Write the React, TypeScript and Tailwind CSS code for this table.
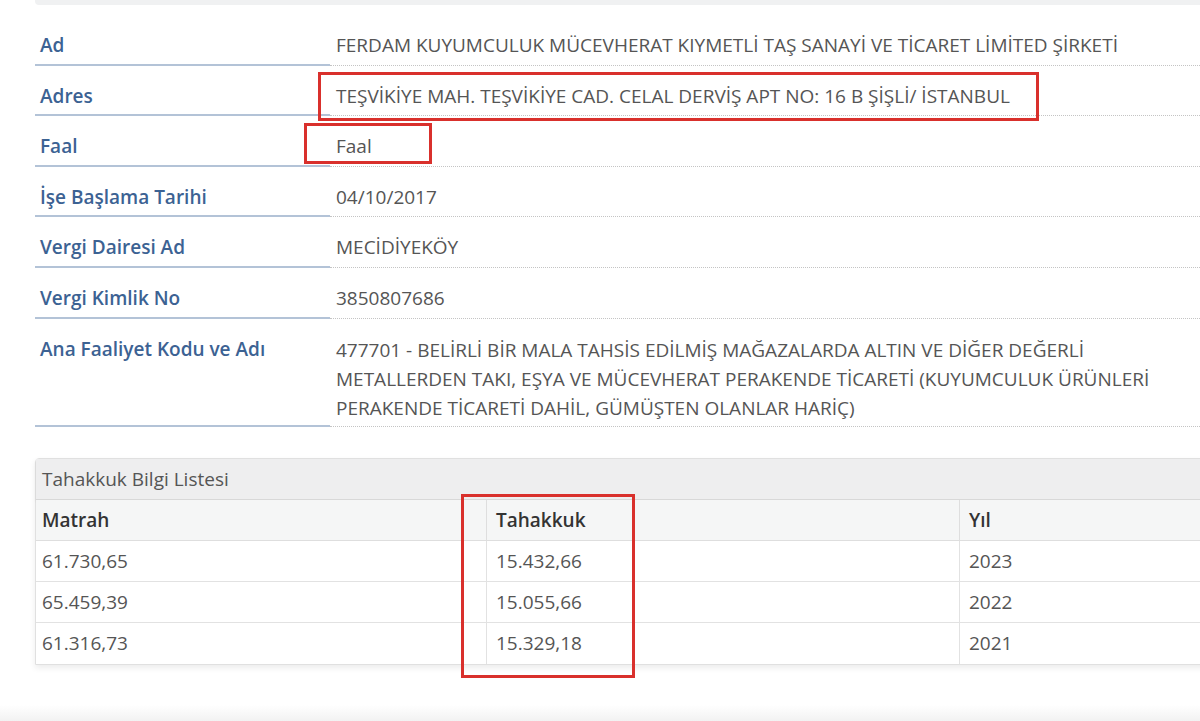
import type { ReactNode } from 'react'

type Row = { label: string; value: ReactNode; tall?: boolean }

const rows: Row[] = [
  { label: 'Ad', value: 'FERDAM KUYUMCULUK MÜCEVHERAT KIYMETLİ TAŞ SANAYİ VE TİCARET LİMİTED ŞİRKETİ' },
  { label: 'Adres', value: 'TEŞVİKİYE MAH. TEŞVİKİYE CAD. CELAL DERVİŞ APT NO: 16 B ŞİŞLİ/ İSTANBUL' },
  { label: 'Faal', value: 'Faal' },
  { label: 'İşe Başlama Tarihi', value: '04/10/2017' },
  { label: 'Vergi Dairesi Ad', value: 'MECİDİYEKÖY' },
  { label: 'Vergi Kimlik No', value: '3850807686' },
  {
    label: 'Ana Faaliyet Kodu ve Adı',
    value: (
      <>
        477701 - BELİRLİ BİR MALA TAHSİS EDİLMİŞ MAĞAZALARDA ALTIN VE DİĞER DEĞERLİ
        <br />
        METALLERDEN TAKI, EŞYA VE MÜCEVHERAT PERAKENDE TİCARETİ (KUYUMCULUK ÜRÜNLERİ
        <br />
        PERAKENDE TİCARETİ DAHİL, GÜMÜŞTEN OLANLAR HARİÇ)
      </>
    ),
    tall: true,
  },
]

const tahakkuk = [
  { matrah: '61.730,65', tahakkuk: '15.432,66', yil: '2023' },
  { matrah: '65.459,39', tahakkuk: '15.055,66', yil: '2022' },
  { matrah: '61.316,73', tahakkuk: '15.329,18', yil: '2021' },
]

function InfoRow({ row }: { row: Row }) {
  return (
    <div className={`flex ${row.tall ? 'h-[108.4px]' : 'h-[50.6px]'}`}>
      <div className="w-[295px] shrink-0 border-b-2 border-[#b3c3d7] pl-[5px] pt-[17px] text-[19px] font-semibold leading-[26px] text-[#3c6293]">
        {row.label}
      </div>
      <div
        className={`flex-1 border-b border-dotted border-[#c4c4c4] pl-[6px] text-[19px] text-[#555] ${
          row.tall ? 'pt-[17px] leading-[29px]' : 'pt-[17px] leading-[26px]'
        }`}
      >
        {row.value}
      </div>
    </div>
  )
}

export default function App() {
  return (
    <div
      className="relative h-[721px] w-[1200px] overflow-hidden bg-white"
      style={{ fontFamily: '"Open Sans", "Noto Sans", sans-serif' }}
    >
      <div className="ml-[35px] h-[5px] rounded-bl-[4px] bg-[#f0f1f2]" />

      <div className="ml-[35px] mt-[10px]">
        {rows.map((r) => (
          <InfoRow key={r.label} row={r} />
        ))}
      </div>

      <div className="ml-[35px] mt-[31px] w-[1200px] rounded-t-[4px] border border-[#e0e0e0] shadow-[0_3px_6px_rgba(0,0,0,0.08)]">
        <div className="h-[41px] border-b border-[#d8d8d8] bg-[#eeeeef] pl-[6px] text-[19px] leading-[41px] text-[#555] shadow-[0_2px_3px_rgba(0,0,0,0.06)]">
          Tahakkuk Bilgi Listesi
        </div>
        <div className="grid grid-cols-[450px_473px_1fr] text-[19px]">
          <div className="h-[41px] border-b border-[#dedede] bg-[#f5f6f6] pl-[6px] font-semibold leading-[41px] text-[#333]">Matrah</div>
          <div className="h-[41px] border-b border-l border-[#dedede] bg-[#f5f6f6] pl-[9px] font-semibold leading-[41px] text-[#333]">Tahakkuk</div>
          <div className="h-[41px] border-b border-l border-[#dedede] bg-[#f5f6f6] pl-[9px] font-semibold leading-[41px] text-[#333]">Yıl</div>
          {tahakkuk.map((t, i) => (
            <div key={t.yil} className="contents">
              <div className={`h-[41px] pl-[6px] leading-[41px] text-[#555] ${i < 2 ? 'border-b border-[#e2e2e2]' : ''}`}>{t.matrah}</div>
              <div className={`h-[41px] border-l border-[#e2e2e2] pl-[9px] leading-[41px] text-[#555] ${i < 2 ? 'border-b' : ''}`}>{t.tahakkuk}</div>
              <div className={`h-[41px] border-l border-[#e2e2e2] pl-[9px] leading-[41px] text-[#555] ${i < 2 ? 'border-b' : ''}`}>{t.yil}</div>
            </div>
          ))}
        </div>
      </div>

      <div className="absolute bottom-0 left-0 h-[16px] w-full bg-gradient-to-b from-white to-[#f2f2f2]" />

      {/* red highlight boxes */}
      <div className="absolute left-[318px] top-[72px] h-[49px] w-[721px] border-[3px] border-[#d9302c]" />
      <div className="absolute left-[304px] top-[123px] h-[41px] w-[128px] border-[3px] border-[#d9302c]" />
      <div className="absolute left-[461px] top-[494px] h-[184px] w-[174px] border-[3px] border-[#d9302c]" />
    </div>
  )
}
